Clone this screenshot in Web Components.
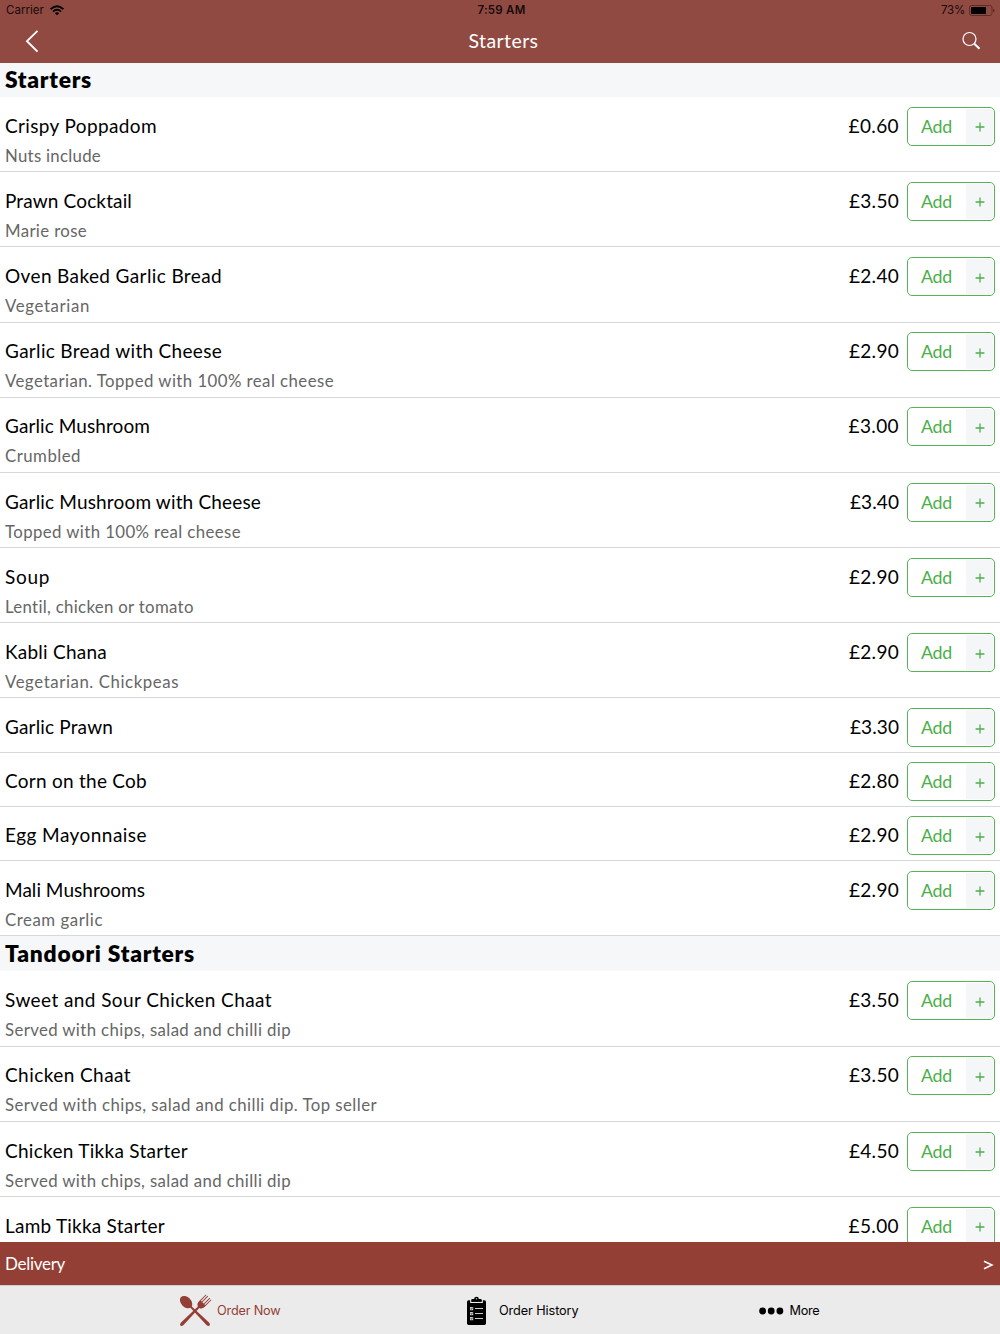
<!DOCTYPE html>
<html lang="en"><head><meta charset="utf-8"><title>Starters</title>
<style>html,body{margin:0;height:100%;overflow:hidden;background:#fff}body{font-family:Lato,"Open Sans",sans-serif;color:#000}</style></head>
<body><menu-app></menu-app>
<script>
const attach=(el,html)=>{el.attachShadow({mode:'open'}).innerHTML=html};

// Text run whose tracking is adjusted so that it spans the width in the "w" attribute.
class TrackText extends HTMLElement{
  connectedCallback(){
    if(this.shadowRoot)return;
    attach(this,'<style>:host{display:inline-block;white-space:nowrap}</style><slot></slot>');
    const w=parseFloat(this.getAttribute('w')),n=this.textContent.length;
    if(w&&n)this.style.letterSpacing=((w-this.getBoundingClientRect().width)/n).toFixed(3)+'px';
  }
}
class StatusBar extends HTMLElement{
  connectedCallback(){attach(this,`<style>
  :host{display:grid;grid-template-columns:1fr auto 1fr;height:20px;align-items:center;padding:1px 6px 0 6px;box-sizing:border-box;font:11.5px/19px Inter,sans-serif;color:#160b0a}
  .l,.r{display:flex;align-items:center}.r{justify-content:flex-end;gap:4px}.l{gap:6px}b{font-weight:600}svg{display:block;overflow:visible}
  .c{padding-left:3px}
  </style><div class="l"><track-text w="38">Carrier</track-text><svg width="14" height="11" viewBox="0 0 14 11"><g fill="none" stroke="#000" stroke-width="1.9"><path d="M.6 4.1Q7-1.5 13.4 4.1"/><path d="M3 6.6Q7 3.1 11 6.6"/></g><path d="M4.9 8.2Q7 6.5 9.1 8.2L7 10.3Z"/></svg></div>
  <b class="c"><track-text w="48">7:59 AM</track-text></b>
  <div class="r"><track-text w="24">73%</track-text><svg width="25" height="12" viewBox="0 0 25 12"><rect x=".5" y=".5" width="22.5" height="10" rx="2.3" fill="none" stroke="#5a2d28"/><rect x="2" y="1.9" width="15" height="7.2" rx=".8"/><path d="M24.2 3.7v3.6q1.3-.5 1.3-1.8t-1.3-1.8" fill="#4b2522"/></svg></div>`)}
}
class NavBar extends HTMLElement{
  connectedCallback(){attach(this,`<style>
  :host{display:grid;grid-template-columns:1fr auto 1fr;height:43px;box-sizing:border-box;align-items:center;color:#fff;font-size:19.5px;line-height:40px;padding:0 19px 2px 25px}
  svg{display:block}.s{justify-self:end}.t{height:40px;padding-left:1px}
  </style><svg width="14" height="24" viewBox="0 0 14 24"><path d="M12.5 1.8 2 12.2 12.5 22.6" fill="none" stroke="#fff" stroke-width="1.9"/></svg>
  <div class="t"><track-text w="70">Starters</track-text></div>
  <svg class="s" width="19" height="19" viewBox="0 0 19 19" fill="none" stroke="#fff"><circle cx="7.5" cy="8" r="6.5" stroke-width="1.2"/><path d="m12.3 12.7 5.2 5.1" stroke-width="2"/></svg>`)}
}
class SectionTitle extends HTMLElement{
  connectedCallback(){attach(this,`<style>:host{display:block;box-sizing:border-box;height:34px;padding-left:5px;background:#f6f7f9;font-size:22.8px;font-weight:800;line-height:32px}:host([tall]){height:35.4px;line-height:34.6px}</style><slot></slot>`)}
}
class AddButton extends HTMLElement{
  connectedCallback(){attach(this,`<style>
  :host{display:flex;box-sizing:border-box;width:88px;height:39px;border:1.3px solid #57b456;border-radius:5px;padding:1px;color:#4caf4b;overflow:hidden;background:#fff}
  .a{width:55px;text-align:center;font-size:17.8px;line-height:34.4px;margin-right:2px}
  .p{flex:1;display:flex;align-items:center;justify-content:center;background:#f5f6f8;padding:2px 0 0 1px}
  </style><div class="a"><track-text w="31">Add</track-text></div><div class="p"><svg width="10" height="10" viewBox="0 0 10 10"><path d="M5 .6v8.8M.6 5h8.8" stroke="#4caf4b" stroke-width="1.3"/></svg></div>`)}
}
class MenuItem extends HTMLElement{
  connectedCallback(){
    const a=n=>this.getAttribute(n)||'';
    attach(this,`<style>
  :host{display:flex;box-sizing:border-box;height:${a('desc')?75.18:54.15}px;padding:9.8px 5px 0;border-bottom:1px solid #d7d8d9}
  .x{flex:1}.n{font-size:19px;line-height:37.8px;height:34px}.d{font-size:16.8px;line-height:29px;color:#666}
  .p{font-size:19px;line-height:37.8px;margin-right:8px}
  </style><div class="x"><div class="n"><track-text w="${a('nw')}">${a('name')}</track-text></div>${a('desc')?`<div class="d"><track-text w="${a('dw')}">${a('desc')}</track-text></div>`:''}</div>
  <div class="p"><track-text w="${a('pw')||50}">${a('price')}</track-text></div><add-button></add-button>`)}
}
class DeliveryBar extends HTMLElement{
  connectedCallback(){attach(this,`<style>:host{display:flex;justify-content:space-between;box-sizing:border-box;height:43px;padding:0 6px 0 5px;background:#943f36;color:#fff;font-size:17px;line-height:43px}svg{margin-top:18px}</style><track-text w="60">Delivery</track-text><svg width="11" height="10" viewBox="0 0 11 10"><path d="M1 1.2 9 5 1 8.8" fill="none" stroke="#fff" stroke-width="1.5"/></svg>`)}
}
class TabItem extends HTMLElement{
  connectedCallback(){attach(this,`<style>:host{display:flex;align-items:center;gap:var(--gap,6px);font:12.7px/20px Inter,sans-serif}::slotted(svg){display:block;overflow:visible}</style><slot name="icon"></slot><slot></slot>`)}
}
class TabBar extends HTMLElement{
  connectedCallback(){attach(this,`<style>
  :host{display:grid;grid-template-columns:466px 292px 1fr;box-sizing:border-box;height:49px;border-top:1px solid #cfcfcf;background:#ebebeb;padding-top:1px}
  .one{color:#943f36;padding-left:179px}.two{--gap:12px}.three{--gap:5.5px}
  </style>
  <tab-item class="one"><svg slot="icon" width="32" height="32" viewBox="0 0 32 32" fill="#943f36"><g transform="rotate(-45 16 16)"><ellipse cx="16" cy="3.4" rx="5" ry="7.2"/><path d="M15.2 8h1.6l1 26q0 2.5-1.8 2.5T14.2 34Z"/></g><g transform="rotate(45 16 16)"><path d="M12-3.4h.9v8h1.2v-8.2h.9v8.2h1.9v-8.2h.9v8.2h1.2v-8h.9V6q0 4-3.1 4.8L17.8 34q0 2.5-1.8 2.5T14.2 34l.7-23.2Q12 10 12 6Z"/></g></svg><track-text w="63.5">Order Now</track-text></tab-item>
  <tab-item class="two"><svg slot="icon" width="21" height="30" viewBox="0 0 21 30"><rect x="1" y="4.3" width="19" height="24.7" rx="1.7"/><path d="M4.7 3v3.4h11.6V3" fill="none" stroke="#ebebeb" stroke-width="1.1"/><path d="M5.5 5.8V3.1h2.6Q8.2.8 10.5.8t2.4 2.3h2.6v2.7Z"/><circle cx="10.5" cy="2.8" r=".7" fill="#bbb"/><g fill="#ccc"><path d="M4 11h3.2v3.2H4zM4 16h3.2v3.2H4zM4 21h3.2v3.2H4z"/><path d="M9 12.1h8v1H9zM9 17.1h8v1H9zM9 22.1h8v1H9z"/></g><path d="m4.7 12.5.7.7 1.2-1.5M4.7 17.5l.7.7 1.2-1.5M4.7 22.5l.7.7 1.2-1.5" fill="none" stroke="#000" stroke-width=".7"/></svg><track-text w="79.5">Order History</track-text></tab-item>
  <tab-item class="three"><svg slot="icon" width="26" height="8" viewBox="0 0 26 8"><circle cx="4.6" cy="4" r="3.4"/><circle cx="13.2" cy="4" r="3.4"/><circle cx="21.9" cy="4" r="3.4"/></svg><track-text w="30">More</track-text></tab-item>`)}
}
class MenuApp extends HTMLElement{
  connectedCallback(){
    const item=([name,nw,price,pw,desc,dw])=>`<menu-item name="${name}" nw="${nw}" price="${price}" pw="${pw}"${desc?` desc="${desc}" dw="${dw}"`:''}></menu-item>`;
    const starters=[['Crispy Poppadom',152,'£0.60',50.5,'Nuts include',96],['Prawn Cocktail',127,'£3.50',50,'Marie rose',82],['Oven Baked Garlic Bread',217,'£2.40',50,'Vegetarian',85],['Garlic Bread with Cheese',217,'£2.90',50,'Vegetarian. Topped with 100% real cheese',329],['Garlic Mushroom',145,'£3.00',50.5,'Crumbled',76],['Garlic Mushroom with Cheese',256,'£3.40',49,'Topped with 100% real cheese',236],['Soup',45,'£2.90',50,'Lentil, chicken or tomato',189],['Kabli Chana',102,'£2.90',50,'Vegetarian. Chickpeas',174],['Garlic Prawn',108,'£3.30',49],['Corn on the Cob',142,'£2.80',50],['Egg Mayonnaise',142,'£2.90',50],['Mali Mushrooms',140,'£2.90',50,'Cream garlic',98]];
    const dip='Served with chips, salad and chilli dip';
    const tandoori=[['Sweet and Sour Chicken Chaat',267,'£3.50',50,dip,286],['Chicken Chaat',126,'£3.50',50,dip+'. Top seller',372],['Chicken Tikka Starter',183,'£4.50',50,dip,286],['Lamb Tikka Starter',160,'£5.00',50.5]];
    attach(this,`<style>:host{display:flex;flex-direction:column;height:1334px;width:1000px}header{background:#904a42;height:63px;flex:none}main{flex:1;min-height:0;overflow:hidden}delivery-bar,tab-bar{flex:none}</style>
    <header><status-bar></status-bar><nav-bar></nav-bar></header>
    <main><section-title><track-text w="87">Starters</track-text></section-title>${starters.map(item).join('')}
    <section-title tall><track-text w="190">Tandoori Starters</track-text></section-title>${tandoori.map(item).join('')}</main>
    <delivery-bar></delivery-bar><tab-bar></tab-bar>`);
  }
}
for(const [n,c] of Object.entries({'track-text':TrackText,'status-bar':StatusBar,'nav-bar':NavBar,'section-title':SectionTitle,'add-button':AddButton,'menu-item':MenuItem,'delivery-bar':DeliveryBar,'tab-item':TabItem,'tab-bar':TabBar,'menu-app':MenuApp}))customElements.define(n,c);
</script></body></html>
